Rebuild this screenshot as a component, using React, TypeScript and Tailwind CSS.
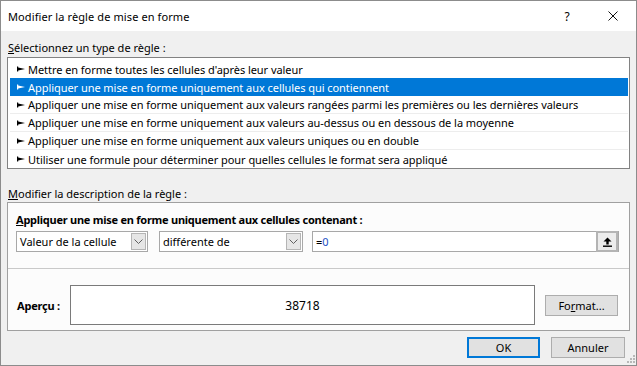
import React from 'react';

const rules = [
  "Mettre en forme toutes les cellules d'après leur valeur",
  'Appliquer une mise en forme uniquement aux cellules qui contiennent',
  'Appliquer une mise en forme uniquement aux valeurs rangées parmi les premières ou les dernières valeurs',
  'Appliquer une mise en forme uniquement aux valeurs au-dessus ou en dessous de la moyenne',
  'Appliquer une mise en forme uniquement aux valeurs uniques ou en double',
  'Utiliser une formule pour déterminer pour quelles cellules le format sera appliqué',
];

function RuleGlyph({ color }: { color: string }) {
  return (
    <svg width="8" height="6" viewBox="0 0 8 6" className="shrink-0">
      <path d="M0 0.5h1.2v5H0z M1.2 1.6 L8 3 L1.2 4.4z" fill={color} />
    </svg>
  );
}

function Chevron() {
  return (
    <svg width="9" height="5" viewBox="0 0 9 5">
      <path d="M0.5 0.5 L4.5 4.5 L8.5 0.5" fill="none" stroke="#606060" strokeWidth="1" />
    </svg>
  );
}

function Combo({ label, width }: { label: string; width: string }) {
  return (
    <div
      className={`flex h-[21px] ${width} items-center justify-between border border-[#a8a8a8] bg-white pl-[3px] pr-[1px]`}
    >
      <span>{label}</span>
      <div className="flex h-[17px] w-[15px] items-center justify-center border border-[#b5b5b5] bg-[#e6e6e6]">
        <Chevron />
      </div>
    </div>
  );
}

export default function App() {
  return (
    <div className="relative flex h-[366px] w-[637px] flex-col border border-[#8c8c8c] bg-[#f0f0f0] font-['Noto_Sans',sans-serif] text-[11px] leading-[15px] text-black">
      {/* title bar */}
      <div className="flex h-[30px] shrink-0 items-center bg-white">
        <span className="pl-[7px] text-[11px] tracking-[0.1px]">Modifier la règle de mise en forme</span>
        <div className="ml-auto flex h-full">
          <div className="flex w-[46px] items-center justify-center text-[12px]">?</div>
          <div className="flex w-[46px] items-center justify-center">
            <svg width="10" height="10" viewBox="0 0 10 10">
              <path d="M0.5 0.5 L9.5 9.5 M9.5 0.5 L0.5 9.5" stroke="#111" strokeWidth="1" />
            </svg>
          </div>
        </div>
      </div>

      <div className="flex flex-1 flex-col px-[6px]">
        <div className="mt-[9px] h-[15px] pl-[1px]">
          <span className="underline">S</span>électionnez un type de règle :
        </div>

        {/* rule list */}
        <div className="mt-[2px] flex flex-col border border-[#828282] bg-white pl-[2px] pr-[1px] pt-[2px]">
          {rules.map((r, i) => {
            const sel = i === 1;
            return (
              <div
                key={i}
                className={`flex h-[18px] items-center gap-[3px] pl-[7px] tracking-[-0.05px] ${
                  sel ? 'bg-[#0078d7] text-white' : 'text-black'
                } ${i < rules.length - 1 && !sel && i !== 0 ? 'border-b border-[#ededed]' : ''}`}
              >
                <RuleGlyph color={sel ? '#ffffff' : '#000000'} />
                <span className="whitespace-nowrap">{r}</span>
              </div>
            );
          })}
        </div>

        <div className="mt-[17px] h-[15px] pl-[1px]">
          <span className="underline">M</span>odifier la description de la règle :
        </div>

        {/* description group */}
        <div className="mt-[1px] flex flex-col border border-[#a0a0a0] bg-[#fcfcfc]">
          <div className="mt-[9px] h-[15px] whitespace-nowrap pl-[8px] font-bold tracking-[-0.25px]">
            <span className="underline">A</span>ppliquer une mise en forme uniquement aux cellules contenant :
          </div>
          <div className="mt-[4px] flex items-center pl-[8px]">
            <Combo label="Valeur de la cellule" width="w-[132px]" />
            <div className="w-[11px]" />
            <Combo label="différente de" width="w-[144px]" />
            <div className="w-[9px]" />
            <div className="flex h-[21px] w-[307px] items-center border border-[#a8a8a8] bg-white">
              <span className="pl-[3px]">
                =<span className="text-[#1c4fc4]">0</span>
              </span>
              <div className="ml-auto flex h-[21px] w-[22px] items-center justify-center border-2 border-[#b4b4b4] bg-[#ececec]">
                <svg width="9" height="10" viewBox="0 0 9 10">
                  <path d="M4.5 0.5 L8.5 4.5 H5.7 V7.5 H3.3 V4.5 H0.5z" fill="#000" />
                  <path d="M0 9.2 H9" stroke="#000" strokeWidth="1.4" />
                </svg>
              </div>
            </div>
          </div>
          <div className="mt-[16px] h-px bg-[#c9c9c9]" />
          <div className="mt-[16px] flex items-center pl-[9px] pr-[11px]">
            <span className="w-[53px] font-bold tracking-[-0.2px]">Aperçu :</span>
            <div className="flex h-[40px] w-[465px] items-center justify-center border border-[#7a7a7a] bg-white text-[12px]">
              38718
            </div>
            <button className="ml-[10px] h-[21px] w-[73px] border border-[#adadad] bg-[#e1e1e1] text-[11px]">
              Fo<span className="underline">r</span>mat...
            </button>
          </div>
          <div className="h-[5px]" />
        </div>

        <div className="mt-[6px] flex justify-end gap-[11px] pr-[5px]">
          <button className="h-[21px] w-[73px] border-2 border-[#0078d7] bg-[#e1e1e1] text-[11px]">OK</button>
          <button className="h-[21px] w-[74px] border border-[#adadad] bg-[#e1e1e1] text-[11px]">Annuler</button>
        </div>
      </div>

      {/* resize grip */}
      <svg width="10" height="10" viewBox="0 0 10 10" className="absolute bottom-[1px] right-[1px]">
        {[
          [8, 0],
          [8, 3],
          [5, 3],
          [8, 6],
          [5, 6],
          [2, 6],
        ].map(([x, y], i) => (
          <rect key={i} x={x} y={y + 1} width="2" height="2" fill="#b8b8b8" />
        ))}
      </svg>
    </div>
  );
}
